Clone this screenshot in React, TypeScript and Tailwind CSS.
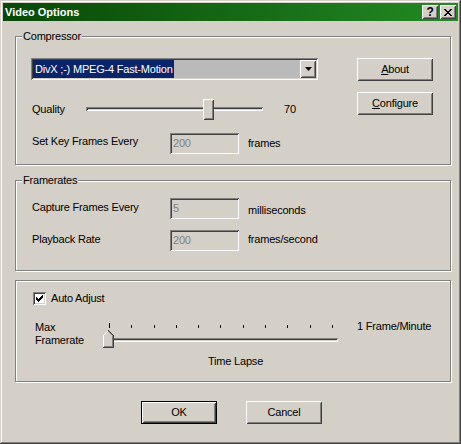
import React from 'react';

const raised =
  'shadow-[inset_1px_1px_0_#ffffff,inset_-1px_-1px_0_#404040,inset_2px_2px_0_#d4d0c8,inset_-2px_-2px_0_#808080]';
const sunken =
  'shadow-[inset_1px_1px_0_#808080,inset_-1px_-1px_0_#ffffff,inset_2px_2px_0_#404040,inset_-2px_-2px_0_#d4d0c8]';

const Group: React.FC<{ label?: string; className: string; children: React.ReactNode }> = ({
  label,
  className,
  children,
}) => (
  <div className={`border border-[#808080] shadow-[1px_1px_0_#ffffff,inset_1px_1px_0_#ffffff] ${className}`}>
    {label && <div className="-mt-[7px] ml-[6px] w-fit h-[13px] bg-[#d4d0c8] px-[1px]">{label}</div>}
    {children}
  </div>
);

const PushButton: React.FC<{ children: React.ReactNode; isDefault?: boolean }> = ({ children, isDefault }) =>
  isDefault ? (
    <div className="w-[76px] h-[23px] border border-black">
      <div className={`w-full h-full flex items-center justify-center ${raised}`}>{children}</div>
    </div>
  ) : (
    <div className={`w-[76px] h-[23px] flex items-center justify-center ${raised}`}>{children}</div>
  );

const Edit: React.FC<{ value: string }> = ({ value }) => (
  <div className={`w-[69px] h-[21px] pl-[3px] flex items-center text-[#808080] bg-[#d4d0c8] ${sunken}`}>{value}</div>
);

const Combo = () => (
  <div className={`w-[287px] h-[22px] p-[2px] flex bg-[#bababa] ${sunken}`}>
    <div className="flex-1 flex">
      <div className="w-fit pl-[2px] pr-[1px] flex items-center text-white bg-[#0a246a]">DivX ;-) MPEG-4 Fast-Motion</div>
    </div>
    <div className={`w-[16px] flex items-center justify-center bg-[#d4d0c8] ${raised}`}>
      <svg width="7" height="4" viewBox="0 0 7 4">
        <polygon points="0,0 7,0 3.5,4" fill="#000" />
      </svg>
    </div>
  </div>
);

const TimeLapse = () => {
  const ticks = Array.from({ length: 11 }, (_, i) => i);
  return (
    <div className="relative w-[236px] h-[27px]">
      <div className="ml-[6px] mt-[2px] w-[224px] h-[5px] flex justify-between items-end">
        {ticks.map((i) => (
          <div key={i} className={i === 0 ? 'w-px h-[5px] bg-black' : 'w-px h-[3px] bg-black'} />
        ))}
      </div>
      <div className={`ml-[5px] mt-[10px] w-[230px] h-[4px] ${sunken}`} />
      <svg className="absolute left-0 top-[9px]" width="11" height="18" viewBox="0 0 11 18" shapeRendering="crispEdges">
        <polygon points="5.5,0 11,5.5 11,18 0,18 0,5.5" fill="#d4d0c8" />
        <polyline points="0.5,17 0.5,5.5 5.5,0.5" fill="none" stroke="#ffffff" />
        <polyline points="5.5,0.5 10.5,5.5 10.5,17.5 0,17.5" fill="none" stroke="#404040" />
        <polyline points="5.5,1.5 9.5,5.5 9.5,16.5 1,16.5" fill="none" stroke="#808080" />
      </svg>
    </div>
  );
};

export default function App() {
  return (
    <div className="w-[461px] h-[444px] p-[3px] flex flex-col bg-[#d4d0c8] text-black text-[11px] leading-[13px] tracking-[-0.2px] font-['Liberation_Sans',Arial,sans-serif] shadow-[inset_-1px_-1px_0_#404040,inset_1px_1px_0_#d4d0c8,inset_-2px_-2px_0_#808080,inset_2px_2px_0_#ffffff]">
      {/* caption */}
      <div className="h-[18px] pl-[2px] pr-[2px] flex items-center bg-linear-to-r from-[#084808] to-[#238a23]">
        <span className="font-bold text-white tracking-normal">Video Options</span>
        <div className="ml-auto flex gap-[2px]">
          <div className={`w-[16px] h-[14px] flex items-center justify-center bg-[#d4d0c8] font-bold text-[12px] ${raised}`}>
            ?
          </div>
          <div className={`w-[16px] h-[14px] flex items-center justify-center bg-[#d4d0c8] ${raised}`}>
            <svg width="8" height="7" viewBox="0 0 8 7" shapeRendering="crispEdges">
              <path d="M0 0h2v1h1v1h2v-1h1v-1h2v1h-1v1h-1v1h-1v1h1v1h1v1h1v1h-2v-1h-1v-1h-2v1h-1v1h-2v-1h1v-1h1v-1h1v-1h-1v-1h-1v-1h-1z" fill="#000" />
            </svg>
          </div>
        </div>
      </div>

      <div className="pl-[12px] pr-[7px] flex flex-col">
        {/* Compressor */}
        <Group label="Compressor" className="mt-[15px] h-[129px]">
          <div className="mt-[15px] pl-[15px] flex">
            <div className="w-[287px] flex flex-col">
              <Combo />
              <div className="mt-[18px] h-[22px] flex items-center">
                <span className="w-[55px] pl-[1px]">Quality</span>
                <div className={`relative w-[177px] h-[4px] ${sunken}`}>
                  <div className={`absolute left-[117px] -top-[8px] w-[11px] h-[21px] bg-[#d4d0c8] ${raised}`} />
                </div>
                <span className="ml-[21px]">70</span>
              </div>
              <div className="mt-[13px] h-[21px] flex items-start">
                <span className="mt-[2px] w-[139px] pl-[1px]">Set Key Frames Every</span>
                <Edit value="200" />
                <span className="mt-[4px] ml-[9px]">frames</span>
              </div>
            </div>
            <div className="ml-[39px] flex flex-col gap-[11px]">
              <PushButton>
                <span>
                  <u>A</u>bout
                </span>
              </PushButton>
              <PushButton>
                <span>
                  <u>C</u>onfigure
                </span>
              </PushButton>
            </div>
          </div>
        </Group>

        {/* Framerates */}
        <Group label="Framerates" className="mt-[15px] h-[91px]">
          <div className="pl-[15px] flex flex-col">
            <div className="mt-[11px] h-[21px] flex items-start">
              <span className="mt-[3px] w-[139px] pl-[1px]">Capture Frames Every</span>
              <Edit value="5" />
              <span className="mt-[6px] ml-[9px]">milliseconds</span>
            </div>
            <div className="mt-[11px] h-[21px] flex items-start">
              <span className="mt-[3px] w-[139px] pl-[1px]">Playback Rate</span>
              <Edit value="200" />
              <span className="mt-[3px] ml-[9px]">frames/second</span>
            </div>
          </div>
        </Group>

        {/* Auto adjust */}
        <Group className="mt-[9px] h-[102px]">
          <div className="pl-[17px] flex flex-col">
            <div className="mt-[11px] h-[13px] flex items-center">
              <div className={`w-[13px] h-[13px] flex items-center justify-center bg-white ${sunken}`}>
                <svg width="7" height="7" viewBox="0 0 7 7" shapeRendering="crispEdges">
                  <path d="M6 0h1v3h-1v1h-1v1h-1v1h-1v1h-1v-1h-1v-1h-1v-3h1v1h1v1h1v-1h1v-1h1z" fill="#000" />
                </svg>
              </div>
              <span className="ml-[5px]">Auto Adjust</span>
            </div>
            <div className="mt-[16px] flex items-start">
              <div className="ml-[2px] w-[68px]">
                Max
                <br />
                Framerate
              </div>
              <TimeLapse />
              <span className="ml-[18px] -mt-[1px]">1 Frame/Minute</span>
            </div>
            <div className="mt-[7px] ml-[175px]">Time Lapse</div>
          </div>
        </Group>
      </div>

      {/* dialog buttons */}
      <div className="mt-[19px] pl-[138px] flex gap-[29px]">
        <PushButton isDefault>OK</PushButton>
        <PushButton>Cancel</PushButton>
      </div>
    </div>
  );
}
